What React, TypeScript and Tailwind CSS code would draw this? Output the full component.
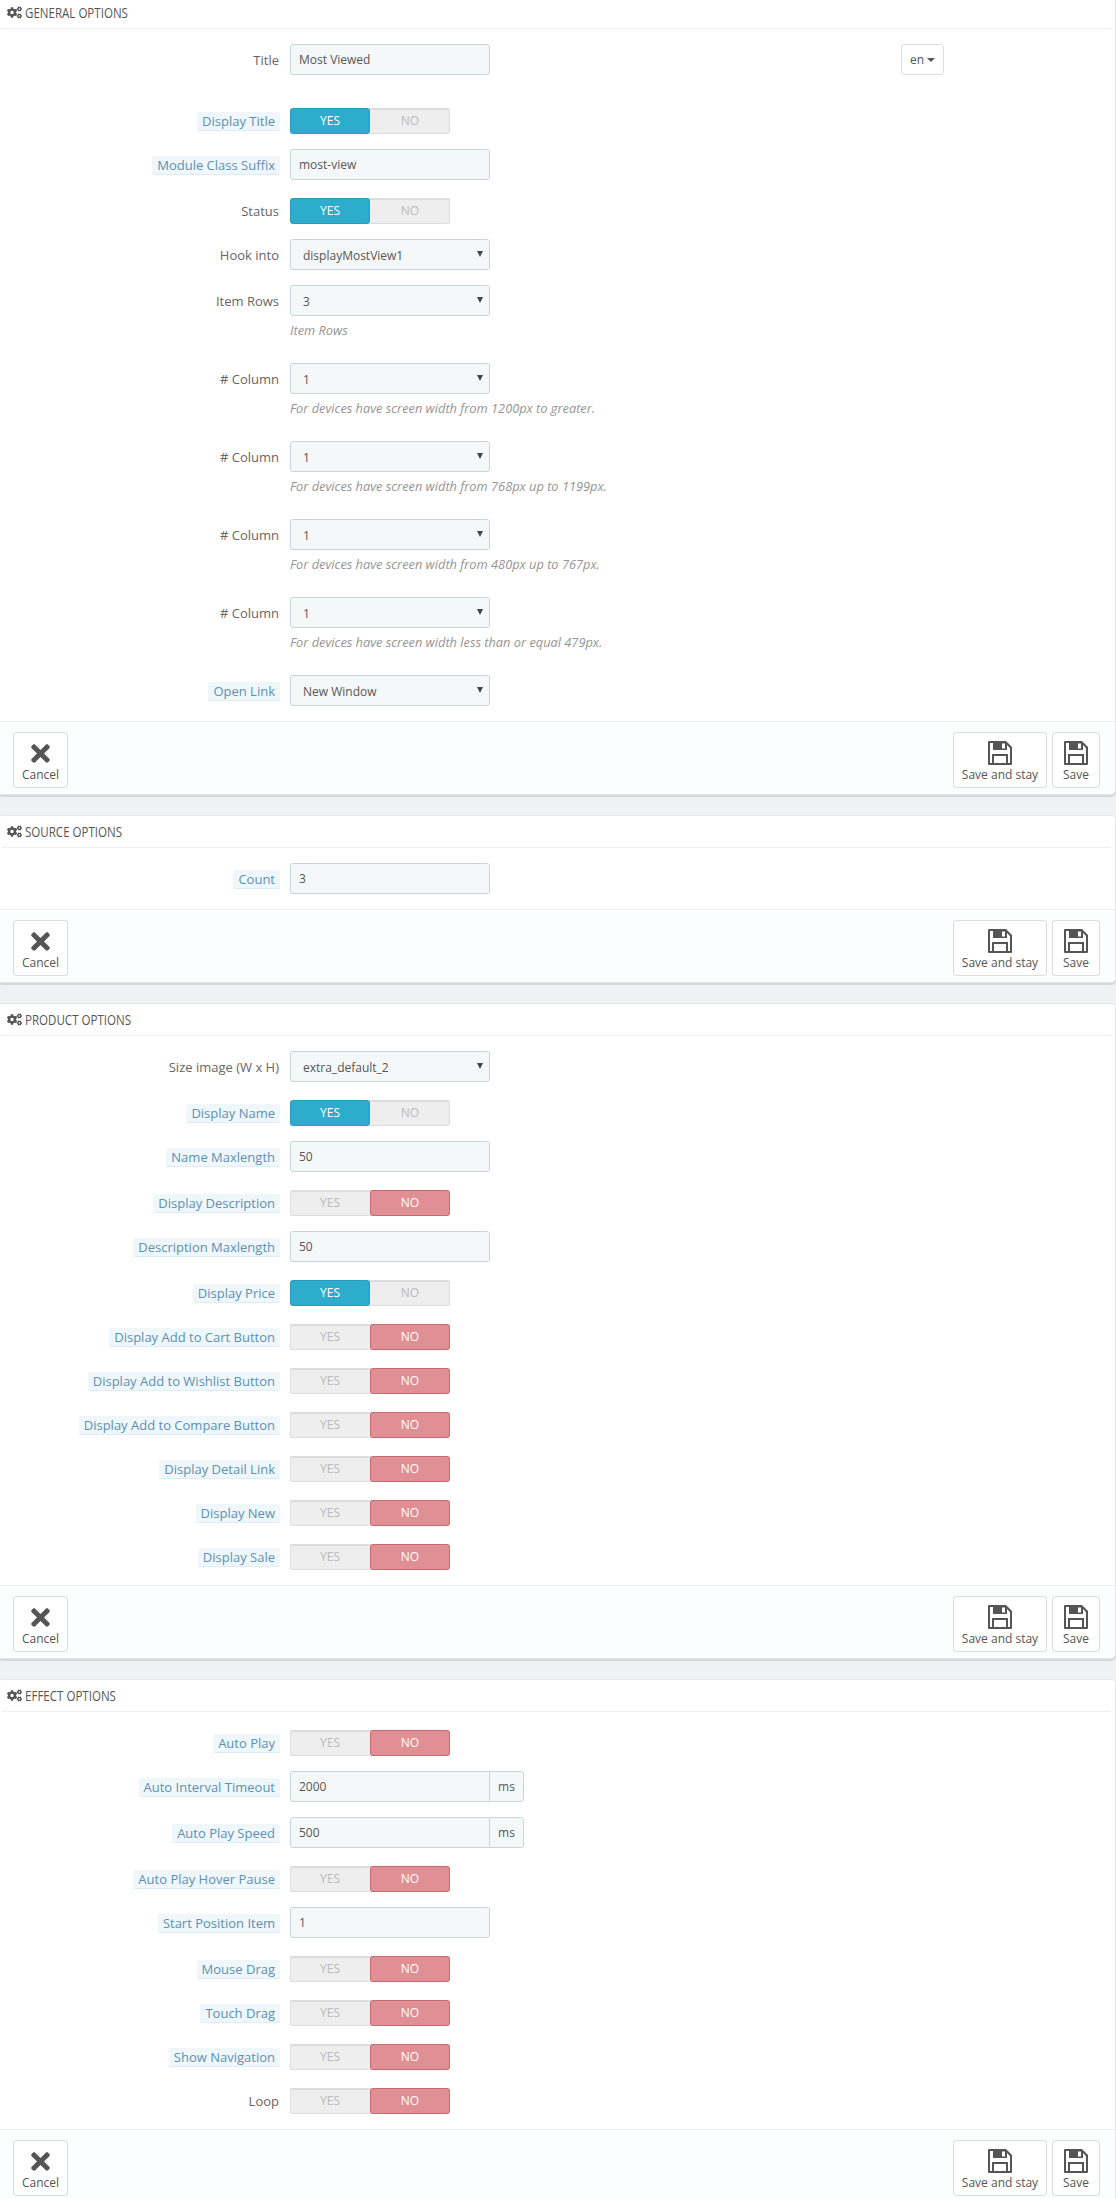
import { FaCogs, FaTimes } from 'react-icons/fa'

type Row = {
  label: string
  tip?: boolean
  kind: 'input' | 'select' | 'toggle'
  value?: string
  on?: boolean
  help?: string
  addon?: string
  lang?: boolean
}

const general: Row[] = [
  { label: 'Title', kind: 'input', value: 'Most Viewed', lang: true },
  { label: 'Display Title', tip: true, kind: 'toggle', on: true },
  { label: 'Module Class Suffix', tip: true, kind: 'input', value: 'most-view' },
  { label: 'Status', kind: 'toggle', on: true },
  { label: 'Hook into', kind: 'select', value: 'displayMostView1' },
  { label: 'Item Rows', kind: 'select', value: '3', help: 'Item Rows' },
  { label: '# Column', kind: 'select', value: '1', help: 'For devices have screen width from 1200px to greater.' },
  { label: '# Column', kind: 'select', value: '1', help: 'For devices have screen width from 768px up to 1199px.' },
  { label: '# Column', kind: 'select', value: '1', help: 'For devices have screen width from 480px up to 767px.' },
  { label: '# Column', kind: 'select', value: '1', help: 'For devices have screen width less than or equal 479px.' },
  { label: 'Open Link', tip: true, kind: 'select', value: 'New Window' },
]

const source: Row[] = [{ label: 'Count', tip: true, kind: 'input', value: '3' }]

const product: Row[] = [
  { label: 'Size image (W x H)', kind: 'select', value: 'extra_default_2' },
  { label: 'Display Name', tip: true, kind: 'toggle', on: true },
  { label: 'Name Maxlength', tip: true, kind: 'input', value: '50' },
  { label: 'Display Description', tip: true, kind: 'toggle' },
  { label: 'Description Maxlength', tip: true, kind: 'input', value: '50' },
  { label: 'Display Price', tip: true, kind: 'toggle', on: true },
  { label: 'Display Add to Cart Button', tip: true, kind: 'toggle' },
  { label: 'Display Add to Wishlist Button', tip: true, kind: 'toggle' },
  { label: 'Display Add to Compare Button', tip: true, kind: 'toggle' },
  { label: 'Display Detail Link', tip: true, kind: 'toggle' },
  { label: 'Display New', tip: true, kind: 'toggle' },
  { label: 'Display Sale', tip: true, kind: 'toggle' },
]

const effect: Row[] = [
  { label: 'Auto Play', tip: true, kind: 'toggle' },
  { label: 'Auto Interval Timeout', tip: true, kind: 'input', value: '2000', addon: 'ms' },
  { label: 'Auto Play Speed', tip: true, kind: 'input', value: '500', addon: 'ms' },
  { label: 'Auto Play Hover Pause', tip: true, kind: 'toggle' },
  { label: 'Start Position Item', tip: true, kind: 'input', value: '1' },
  { label: 'Mouse Drag', tip: true, kind: 'toggle' },
  { label: 'Touch Drag', tip: true, kind: 'toggle' },
  { label: 'Show Navigation', tip: true, kind: 'toggle' },
  { label: 'Loop', kind: 'toggle' },
]

function SaveIcon() {
  return (
    <svg width="24" height="24" viewBox="0 0 24 24" className="text-[#555]">
      <path
        fill="currentColor"
        fillRule="evenodd"
        d="M1 0h17l6 6v17a1 1 0 0 1-1 1H1a1 1 0 0 1-1-1V1a1 1 0 0 1 1-1zM2 2v20h2V13h16v9h2V7l-3-3v5H5V2zM6 15v7h12v-7zM14 2.500v5h3v-5z"
      />
    </svg>
  )
}

function Toggle({ on }: { on?: boolean }) {
  return (
    <div className="mt-[3px] flex h-[26px] w-[160px] rounded-[3px] bg-[#eee] text-xs shadow-[inset_0_0_0_1px_#ddd,inset_0_2px_0_#ddd]">
      <span
        className={
          on
            ? 'flex w-[80px] items-center justify-center rounded-[3px] border border-[#2a9dbc] bg-[#2eacce] pb-px text-white'
            : 'flex w-[80px] items-center justify-center pb-px text-[#bbb]'
        }
      >
        YES
      </span>
      <span
        className={
          on
            ? 'flex w-[80px] items-center justify-center pb-px text-[#bbb]'
            : 'flex w-[80px] items-center justify-center rounded-[3px] border border-[#c9686f] bg-[#e08f95] pb-px text-white'
        }
      >
        NO
      </span>
    </div>
  )
}

function Control({ row }: { row: Row }) {
  if (row.kind === 'toggle') return <Toggle on={row.on} />

  if (row.kind === 'select') {
    return (
      <div className="relative flex h-[31px] w-[200px] items-center rounded-[3px] border border-[#c7d6db] bg-[#f5f8f9] pl-[12px] pt-[2px] text-xs text-[#555]">
        {row.value}
        <span className="absolute right-[6px] top-[11px] h-0 w-0 border-x-[3px] border-t-[6px] border-x-transparent border-t-[#444]" />
      </div>
    )
  }

  return (
    <div className="flex">
      <div
        className={
          row.addon
            ? 'flex h-[31px] w-[200px] items-center rounded-l-[3px] border border-[#c7d6db] bg-[#f5f8f9] pl-[8px] text-xs text-[#555]'
            : 'flex h-[31px] w-[200px] items-center rounded-[3px] border border-[#c7d6db] bg-[#f5f8f9] pl-[8px] text-xs text-[#555]'
        }
      >
        {row.value}
      </div>
      {row.addon && (
        <div className="-ml-px flex h-[31px] w-[35px] items-center justify-center rounded-r-[3px] border border-[#c7d6db] bg-[#f5f8f9] text-xs text-[#555]">
          {row.addon}
        </div>
      )}
    </div>
  )
}

function FormRow({ row }: { row: Row }) {
  return (
    <div className={row.lang ? 'mb-[30px] flex items-start' : 'mb-[15px] flex items-start'}>
      <div className="flex w-[282px] shrink-0 justify-end pt-[7px] text-[13px]">
        {row.tip ? (
          <span className="rounded-[2px] border-b border-[#dbeef8] bg-[#eff7fb] px-[5px] leading-[18px] text-[#5c90b3]">
            {row.label}
          </span>
        ) : (
          <span className="pr-px leading-[19px] text-[#666]">{row.label}</span>
        )}
      </div>
      <div className="ml-[10px]">
        <Control row={row} />
        {row.help && <p className="mt-[5px] h-[27px] text-[12.8px] italic leading-[18px] text-[#959595]">{row.help}</p>}
      </div>
      {row.lang && (
        <div className="ml-[411px] flex h-[31px] w-[43px] items-center justify-center gap-[3px] rounded-[3px] border border-[#ddd] bg-white text-xs text-[#555]">
          en
          <span className="h-0 w-0 border-x-[4px] border-t-[4px] border-x-transparent border-t-[#555]" />
        </div>
      )}
    </div>
  )
}

function FooterButton({ label, icon, width }: { label: string; icon: React.ReactNode; width: string }) {
  return (
    <div className={`${width} flex h-[56px] flex-col items-center rounded-[3px] border border-[#ddd] bg-white pt-2 text-xs text-[#555]`}>
      <div className="flex h-[24px] items-center">{icon}</div>
      <span className="mt-px leading-[18px]">{label}</span>
    </div>
  )
}

function Panel({ title, rows }: { title: string; rows: Row[] }) {
  return (
    <section className="mb-[20px] rounded-[5px] border border-[#e6e6e6] bg-white shadow-[0_2px_0_rgba(0,0,0,0.1)]">
      <h3 className="mx-1 flex h-[32px] items-center gap-[3px] border-b border-[#eee] pl-[5px] text-[15px] font-normal uppercase text-[#555]">
        <FaCogs className="h-[15px] w-[15px] shrink-0 text-[#555]" />
        <span className="origin-left scale-x-[0.77] whitespace-nowrap">{title}</span>
      </h3>
      <div className="pt-[15px]">
        {rows.map((row, i) => (
          <FormRow key={i} row={row} />
        ))}
      </div>
      <div className="flex h-[73px] items-start justify-between rounded-b-[5px] border-t border-[#eee] bg-[#fcfdfe] px-[15px] pt-[10px]">
        <FooterButton label="Cancel" width="w-[55px]" icon={<FaTimes className="h-[27px] w-[19px] text-[#555]" />} />
        <div className="flex gap-[5px]">
          <FooterButton label="Save and stay" width="w-[94px]" icon={<SaveIcon />} />
          <FooterButton label="Save" width="w-[48px]" icon={<SaveIcon />} />
        </div>
      </div>
    </section>
  )
}

export default function App() {
  return (
    <div className="h-[2199px] overflow-hidden bg-[#eff1f2] font-['Open_Sans',sans-serif]">
      <div className="-ml-[3px] -mt-[4px] w-[1119px]">
        <Panel title="General Options" rows={general} />
        <Panel title="Source Options" rows={source} />
        <Panel title="Product Options" rows={product} />
        <Panel title="Effect Options" rows={effect} />
      </div>
    </div>
  )
}
